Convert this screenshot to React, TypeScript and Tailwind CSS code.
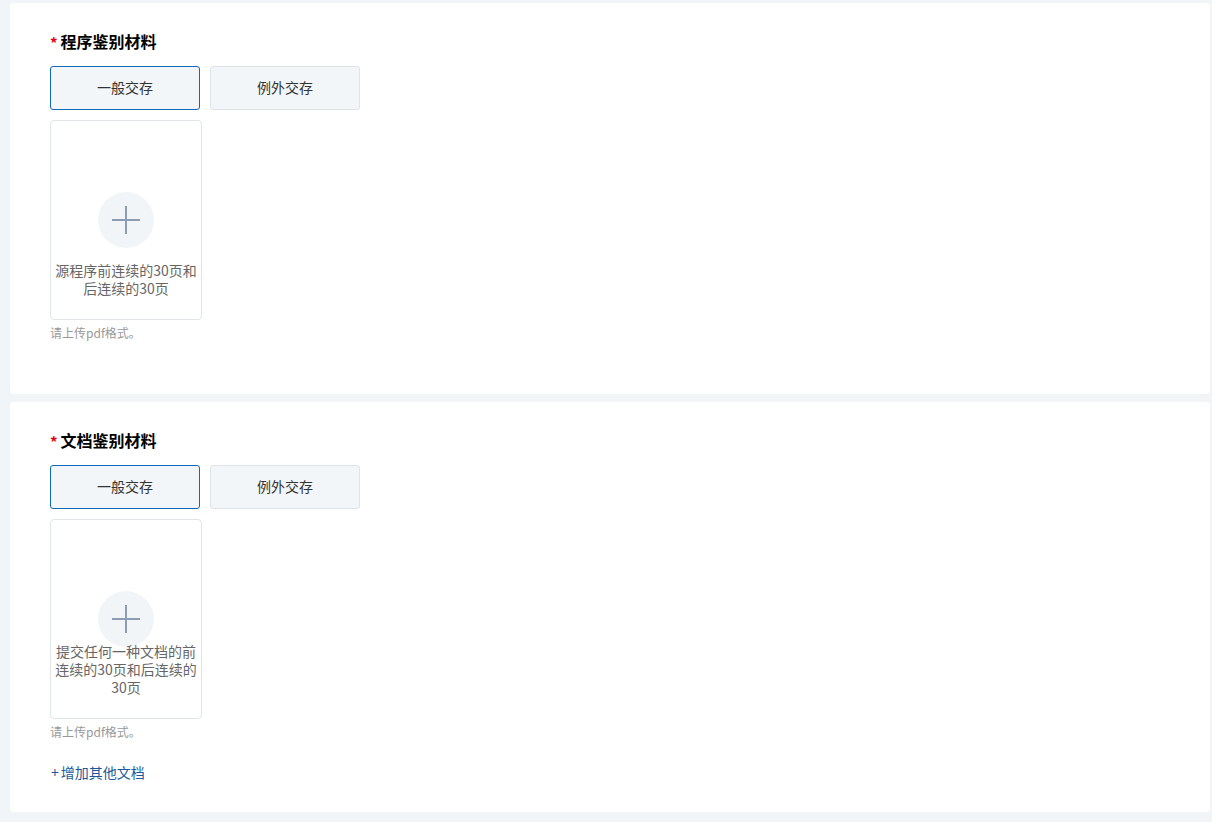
import React, { useState } from 'react';

const font = { fontFamily: '"Microsoft YaHei", "Noto Sans CJK SC", "Noto Sans", sans-serif' };

const UploadBox: React.FC<{ text: string }> = ({ text }) => (
  <div className="relative w-[152px] h-[200px] rounded-[4px] border border-[#dfe5e8] bg-white flex items-center justify-center cursor-pointer">
    <div className="w-14 h-14 rounded-full bg-[#f2f5f7] flex items-center justify-center">
      <svg width="30" height="30" viewBox="0 0 30 30">
        <path d="M15 1v28M1 15h28" stroke="#8d9db2" strokeWidth="2" />
      </svg>
    </div>
    <p className="absolute left-0 right-0 bottom-[22px] px-1 text-center text-[14px] leading-[18px] text-[#666]">
      {text}
    </p>
  </div>
);

const Section: React.FC<{ title: string; hint: string; extra?: boolean }> = ({ title, hint, extra }) => {
  const [mode, setMode] = useState(0);
  return (
    <section className={`bg-white rounded-[4px] pl-10 pt-[26px] ${extra ? 'pb-[30px]' : 'pb-[53px]'}`}>
      <h2 className="flex items-center h-6 text-[16px] font-bold text-black">
        <span className="text-[#e60012] text-[15px] mr-[3px] mt-[4px]">*</span>
        {title}
      </h2>
      <div className="flex gap-[10px] mt-[13px]">
        {['一般交存', '例外交存'].map((label, i) => (
          <button
            key={label}
            onClick={() => setMode(i)}
            className={`w-[150px] h-11 rounded-[3px] border bg-[#f3f6f8] text-[14px] leading-5 text-[#333] pb-[2px] ${
              mode === i ? 'border-[#0f69b8]' : 'border-[#dde3e7]'
            }`}
          >
            {label}
          </button>
        ))}
      </div>
      <div className="mt-[10px]">
        <UploadBox text={hint} />
      </div>
      <p className="mt-[5px] text-[12px] leading-4 text-[#999]">请上传pdf格式。</p>
      {extra && (
        <button className="mt-[22px] text-[14px] leading-5 text-[#1a5a98] flex items-center">
          <span className="mr-[2px] ml-[1px]">+</span>增加其他文档
        </button>
      )}
    </section>
  );
};

export default function App() {
  return (
    <div style={font} className="min-h-screen bg-[#f2f5f8] pl-[10px] pr-[2px] pt-[3px] pb-[10px] flex flex-col gap-2">
      <Section title="程序鉴别材料" hint="源程序前连续的30页和后连续的30页" />
      <Section title="文档鉴别材料" hint="提交任何一种文档的前连续的30页和后连续的30页" extra />
    </div>
  );
}
